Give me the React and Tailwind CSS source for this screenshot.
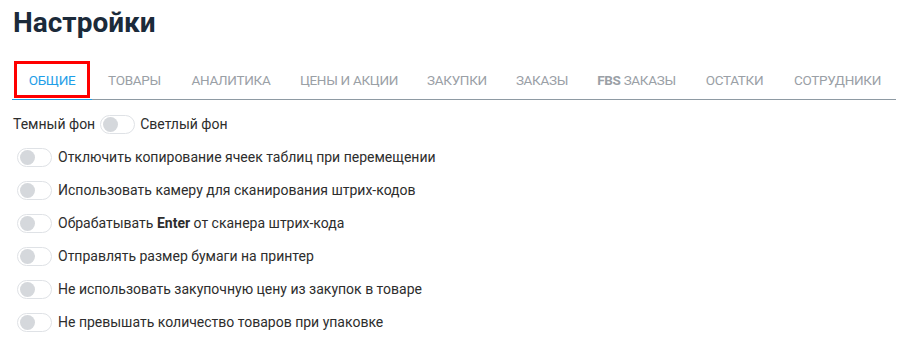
import React from "react";

const tabs = [
  { t: "ОБЩИЕ", w: "w-[80px]" },
  { t: "ТОВАРЫ", w: "w-[85px]" },
  { t: "АНАЛИТИКА", w: "w-[108px]" },
  { t: "ЦЕНЫ И АКЦИИ", w: "w-[128px]" },
  { t: "ЗАКУПКИ", w: "w-[88px]" },
  { t: "ЗАКАЗЫ", w: "w-[82px]" },
  { t: "FBS", w: "w-[107px]" },
  { t: "ОСТАТКИ", w: "w-[89px]" },
  { t: "СОТРУДНИКИ", w: "w-[117px]" },
];

function Toggle() {
  return (
    <span className="inline-flex items-center w-[35px] h-[19px] rounded-full border border-[#dfe2e6] bg-white px-[2px] shrink-0">
      <span className="block w-[15px] h-[15px] rounded-full bg-[#d5d8dc]" />
    </span>
  );
}

const rows = [
  <>Отключить копирование ячеек таблиц при перемещении</>,
  <>Использовать камеру для сканирования штрих-кодов</>,
  <>Обрабатывать <b className="font-bold">Enter</b> от сканера штрих-кода</>,
  <>Отправлять размер бумаги на принтер</>,
  <>Не использовать закупочную цену из закупок в товаре</>,
  <>Не превышать количество товаров при упаковке</>,
];

export default function App() {
  return (
    <div className="w-[921px] h-[352px] bg-white font-['Roboto',sans-serif] overflow-hidden">
      <div className="pl-[13px] pt-[6px]">
        <h1 className="text-[28px] leading-[34px] font-bold text-[#1b2a3a] font-['Roboto',sans-serif]">Настройки</h1>
      </div>
      <div className="ml-[12px] w-[884px] mt-[21px] border-b border-[#8e9aa3] flex">
        {tabs.map(({ t, w }, i) => (
          <div
            key={t}
            className={
              "relative h-[38px] flex items-center justify-center text-[13.5px] tracking-[-0.3px] whitespace-nowrap shrink-0 " +
              w +
              " " +
              (i === 0 ? "text-[#1e9ee8]" : "text-[#9aa0a6]")
            }
          >
            {i === 0 && (
              <>
                <span className="absolute left-[2px] top-[0px] w-[76px] h-[37px] border-[3px] border-[#ff0000]" />
                <span className="absolute left-0 right-0 bottom-[-1px] h-[1px] bg-[#1e9ee8]" />
              </>
            )}
            {t === "FBS" ? (
              <span><b className="font-bold">FBS</b> ЗАКАЗЫ</span>
            ) : (
              t
            )}
          </div>
        ))}
      </div>
      <div className="text-[14px] text-[#2d2d2d]">
        <div className="flex items-center pl-[13px] mt-[15px] h-[19px] gap-[5px]">
          <span>Темный фон</span>
          <Toggle />
          <span>Светлый фон</span>
        </div>
        <div className="flex flex-col pl-[17px] mt-[14px] gap-[14px]">
          {rows.map((r, i) => (
            <div key={i} className="flex items-center h-[19px] gap-[6px]">
              <Toggle />
              <span>{r}</span>
            </div>
          ))}
        </div>
      </div>
    </div>
  );
}
